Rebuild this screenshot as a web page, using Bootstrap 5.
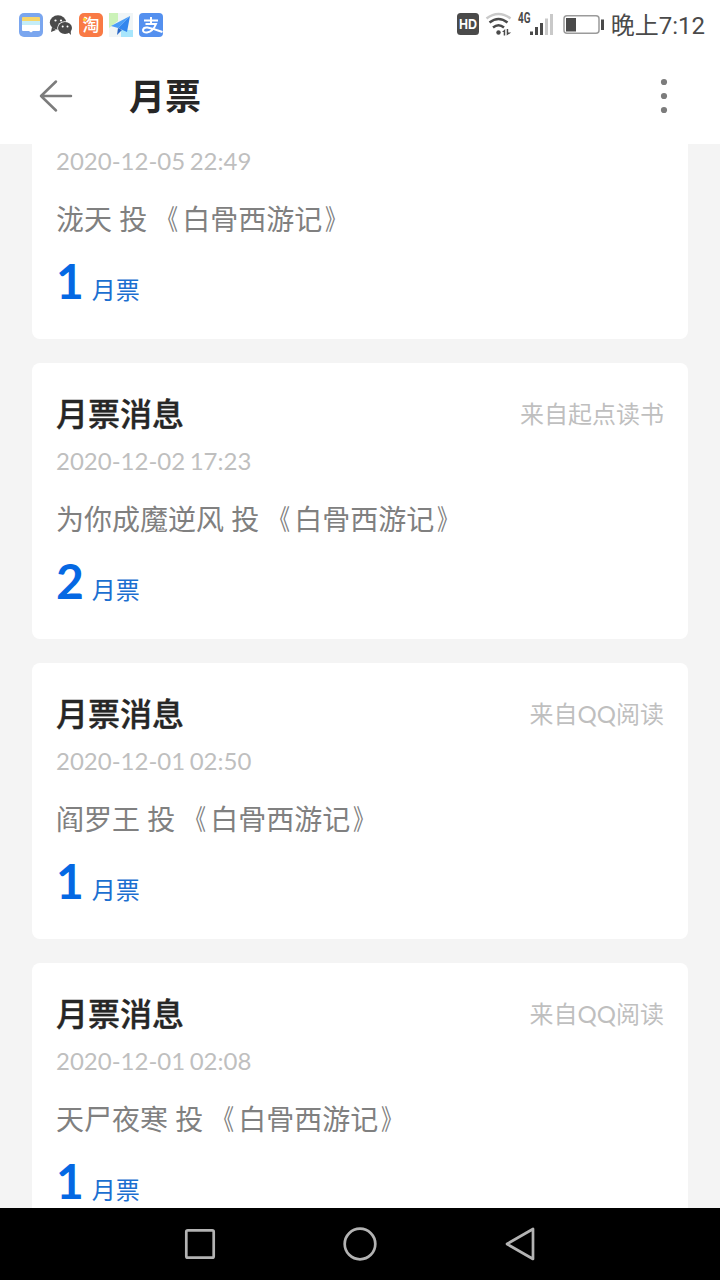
<!DOCTYPE html>
<html lang="zh-CN">
<head>
<meta charset="utf-8">
<meta name="viewport" content="width=device-width, initial-scale=1">
<title>月票</title>
<link href="https://cdn.jsdelivr.net/npm/bootstrap@5.3.0/dist/css/bootstrap.min.css" rel="stylesheet">
<style>
body{font-family:Lato,"Noto Sans CJK SC",sans-serif;background:#f4f4f4;height:1280px}
.status{height:48px;padding:2px 15px 0 19px;color:#4a4a4a}
.status-left{gap:6px}
.clock{font-family:Roboto,"Noto Sans CJK SC",sans-serif;font-size:24px;line-height:46px;margin-left:6px;padding-top:1px;white-space:nowrap;font-weight:400}
.topbar{height:96px;padding:0 48px 0 32px}
.page-title{font-size:36px;font-weight:700;line-height:48px;color:#262626;margin-left:49px}
.feed{padding:0 32px;min-height:0}
.feed-list{gap:24px}
.ticket{height:276px;border:0;border-radius:8px;padding:27px 24px 0;flex:none}
.ticket-cut{height:195px;padding-top:0;border-radius:0 0 8px 8px}
.ticket-cut .stamp{margin-top:-1px}
.ticket-title{font-size:32px;line-height:48px;font-weight:500;color:#262626;-webkit-text-stroke:.4px #262626;height:48px}
.source{font-size:24px;line-height:48px;color:#bfbfbf}
.stamp{font-size:24px;line-height:36px;margin-top:5px;color:#bfbfbf;word-spacing:-1.700px}
.message{font-size:28px;line-height:40px;margin-top:20px;color:#808080;white-space:nowrap}
.message i{display:inline-block;font-style:normal;transform:translateX(-4px) scaleX(.75);transform-origin:100% 50%}
.message i+i{transform:translateX(3px) scaleX(.75);transform-origin:0 50%}
.count{color:#0a66df;margin-top:10px;height:64px}
.count b{font-size:48px;line-height:64px;font-weight:700;color:#0568e3}
.count span{font-size:24px;line-height:36px;margin-left:8px;color:#1c6fd0}
.sysnav{height:72px;gap:124px}
svg{display:block;flex:none}
</style>
</head>
<body class="d-flex flex-column overflow-hidden">
<header class="bg-white flex-shrink-0">
  <div class="status d-flex align-items-center justify-content-between">
    <div class="status-left d-flex">
      <svg width="24" height="24" viewBox="0 0 24 24"><rect width="24" height="24" rx="5" fill="#7aa6ef"/><path d="M3 8V5q0-1 1-1h16q1 0 1 1v3z" fill="#f7d66a"/><path d="M3 8h18v5H3z" fill="#c5edf8"/><path d="M3 12h18v5q0 1-1 1h-6l-2 1.500L10 18H4q-1 0-1-1z" fill="#fff"/></svg>
      <svg width="24" height="24" viewBox="0 0 24 24"><g fill="#4a4a4a"><ellipse cx="9" cy="9.500" rx="8.200" ry="7.200"/><path d="m3 14-1 5 5-2z"/></g><ellipse cx="16" cy="15" rx="7.800" ry="6.800" fill="#fff"/><ellipse cx="16" cy="15" rx="7" ry="6" fill="#4a4a4a"/><path d="m19 19 3 3-.4-5z" fill="#4a4a4a"/><g fill="#fff"><circle cx="6.500" cy="7.500" r="1.100"/><circle cx="12" cy="7.500" r="1.100"/><circle cx="13.700" cy="13.500" r="1"/><circle cx="18.500" cy="13.500" r="1"/></g></svg>
      <svg width="24" height="24" viewBox="0 0 24 24"><rect width="24" height="24" rx="5" fill="#f97a45"/><text x="12" y="18.300" text-anchor="middle" font-size="17" font-weight="500" fill="#fff">淘</text><circle cx="5.600" cy="6.400" r="1.700" fill="#ffd43a"/></svg>
      <svg width="24" height="24" viewBox="0 0 24 24"><path fill="#f0f5f6" d="M0 0h24v24H0z"/><path fill="#cbf2b8" d="M0 0h9v8l-9 7z"/><path fill="#a8e6fc" d="M12 17h12v7H12z"/><path d="M21 3 2 13l7 2z" fill="#4a9df8"/><path d="M21 3 9 15l9 4z" fill="#3386ee"/><path d="m9 15-1 7 5-5z" fill="#2a68c6"/></svg>
      <svg width="24" height="24" viewBox="0 0 24 24"><rect width="24" height="24" rx="4" fill="#5490ef"/><g fill="none" stroke="#fff" stroke-width="2"><path d="M5 7.500h14M12 4v7M6.500 11h10.500Q14 18.500 8 19.500q-4 .3-4-2.500 .5-3 4.500-2.500Q14 15.500 23.500 19"/></g></svg>
    </div>
    <div class="d-flex align-items-center">
      <svg width="148" height="32" viewBox="0 0 148 32" fill="#4a4a4a"><rect x="0" y="4" width="22" height="22" rx="3.500"/><text x="11" y="20" text-anchor="middle" font-family="Liberation Sans,sans-serif" font-weight="700" font-size="14" textLength="18" lengthAdjust="spacingAndGlyphs" fill="#fff">HD</text>
      <g fill="none" stroke-width="2.500"><path d="M29.500 9.500Q41.500 .5 53.500 9.500" stroke="#c9c9c9"/><path d="M32.500 13.500Q41.500 6.500 50.500 13.500M36 18.500Q41.500 14 47 18.500" stroke="#4a4a4a"/></g><circle cx="41.500" cy="23.500" r="2.200"/><path d="m45 23 3.200-3v6.500h-1.500V23zM49.700 20h1.500v3.500h3L49.700 26.500z"/>
      <text x="61" y="14" font-family="Roboto,sans-serif" font-weight="700" font-size="14" textLength="12.500" lengthAdjust="spacingAndGlyphs">4G</text>
      <path d="M73 22.500h3V26h-3zM78 18h3v8h-3zM83 14h3v12h-3z"/><path d="M88 9.500h3V26h-3zM93 5h3v21h-3z" fill="#c9c9c9"/>
      <rect x="107" y="6.700" width="35" height="17.600" rx="3" fill="none" stroke="#9b9b9b" stroke-width="1.500"/><path d="M109 9h10v13.500h-10zM144 10.500h3v10.500h-3z"/></svg>
      <div class="clock">晚上7:12</div>
    </div>
  </div>
  <nav class="topbar d-flex align-items-center">
    <svg width="48" height="48" viewBox="0 0 48 48" fill="none" stroke="#7c7c7c" stroke-width="2.500" stroke-linecap="round" stroke-linejoin="round"><path d="M39 24H9M24 9.500 9 24l15 14.500"/></svg>
    <h1 class="page-title mb-0">月票</h1>
    <svg class="ms-auto" width="16" height="48" viewBox="0 0 16 48" fill="#7c7c7c"><circle cx="8" cy="10" r="3.100"/><circle cx="8" cy="24" r="3.100"/><circle cx="8" cy="38" r="3.100"/></svg>
  </nav>
</header>
<main class="feed flex-grow-1 overflow-hidden">
  <div class="feed-list d-flex flex-column">
    <article class="card ticket ticket-cut">
      <div class="stamp">2020-12-05 22:49</div><div class="message">泷天 投 <i>《</i>白骨西游记<i>》</i></div>
      <div class="count d-flex align-items-baseline"><b>1</b><span>月票</span></div>
    </article>
    <article class="card ticket">
      <div class="d-flex justify-content-between"><div class="ticket-title">月票消息</div><div class="source">来自起点读书</div></div>
      <div class="stamp">2020-12-02 17:23</div><div class="message">为你成魔逆风 投 <i>《</i>白骨西游记<i>》</i></div>
      <div class="count d-flex align-items-baseline"><b>2</b><span>月票</span></div>
    </article>
    <article class="card ticket">
      <div class="d-flex justify-content-between"><div class="ticket-title">月票消息</div><div class="source">来自QQ阅读</div></div>
      <div class="stamp">2020-12-01 02:50</div><div class="message">阎罗王 投 <i>《</i>白骨西游记<i>》</i></div>
      <div class="count d-flex align-items-baseline"><b>1</b><span>月票</span></div>
    </article>
    <article class="card ticket">
      <div class="d-flex justify-content-between"><div class="ticket-title">月票消息</div><div class="source">来自QQ阅读</div></div>
      <div class="stamp">2020-12-01 02:08</div><div class="message">天尸夜寒 投 <i>《</i>白骨西游记<i>》</i></div>
      <div class="count d-flex align-items-baseline"><b>1</b><span>月票</span></div>
    </article>
  </div>
</main>
<footer class="sysnav bg-black d-flex align-items-center justify-content-center flex-shrink-0">
  <svg width="36" height="36" viewBox="0 0 36 36" fill="none" stroke="#b3b3b3" stroke-width="2.700"><rect x="4.300" y="4.300" width="27.400" height="27.400" rx="1.500"/></svg>
  <svg width="36" height="36" viewBox="0 0 36 36" fill="none" stroke="#b3b3b3" stroke-width="2.700"><circle cx="18" cy="18" r="15.300"/></svg>
  <svg width="36" height="36" viewBox="0 0 36 36" fill="none" stroke="#b3b3b3" stroke-width="2.700" stroke-linejoin="round"><path d="M31 3v30L5 18z"/></svg>
</footer>
<script src="https://cdn.jsdelivr.net/npm/bootstrap@5.3.0/dist/js/bootstrap.bundle.min.js"></script>
</body>
</html>
